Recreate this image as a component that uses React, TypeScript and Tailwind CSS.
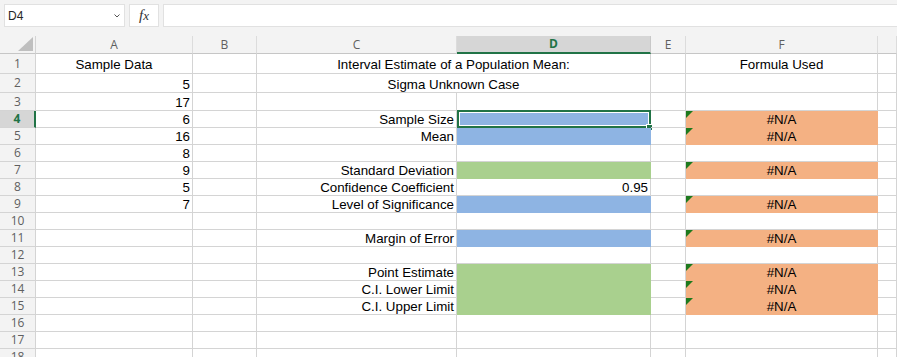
import React from 'react';

type Fill = 'blue' | 'green' | 'orange';
type CellDef = { v?: string; align?: 'l' | 'c' | 'r'; fill?: Fill; err?: boolean; span?: boolean };

const COLS = ['A', 'B', 'C', 'D', 'E', 'F', 'G'];
const SEL_COL = 'D';
const SEL_ROW = 4;
const ROW_COUNT = 18;

const FILLS: Record<Fill, string> = {
  blue: 'bg-[#8eb4e3] border-transparent',
  green: 'bg-[#a9d08e] border-transparent',
  orange: 'bg-[#f4b183] border-transparent',
};

const ALIGN = { l: 'justify-start', c: 'justify-center', r: 'justify-end' };

const na: CellDef = { v: '#N/A', align: 'c', fill: 'orange', err: true };
const num = (v: string): CellDef => ({ v, align: 'r' });
const label = (v: string): CellDef => ({ v, align: 'r' });

const sheet: Record<number, Partial<Record<string, CellDef>>> = {
  1: {
    A: { v: 'Sample Data', align: 'c' },
    C: { v: 'Interval Estimate of a Population Mean:', align: 'c', span: true },
    F: { v: 'Formula Used', align: 'c' },
  },
  2: { A: num('5'), C: { v: 'Sigma Unknown Case', align: 'c', span: true } },
  3: { A: num('17') },
  4: { A: num('6'), C: label('Sample Size'), D: { fill: 'blue' }, F: na },
  5: { A: num('16'), C: label('Mean'), D: { fill: 'blue' }, F: na },
  6: { A: num('8') },
  7: { A: num('9'), C: label('Standard Deviation'), D: { fill: 'green' }, F: na },
  8: { A: num('5'), C: label('Confidence Coefficient'), D: num('0.95') },
  9: { A: num('7'), C: label('Level of Significance'), D: { fill: 'blue' }, F: na },
  11: { C: label('Margin of Error'), D: { fill: 'blue' }, F: na },
  13: { C: label('Point Estimate'), D: { fill: 'green' }, F: na },
  14: { C: label('C.I. Lower Limit'), D: { fill: 'green' }, F: na },
  15: { C: label('C.I. Upper Limit'), D: { fill: 'green' }, F: na },
};

function ErrorMark() {
  return (
    <svg className="absolute left-0 top-0" width="7" height="7" viewBox="0 0 7 7">
      <polygon points="0,0 7,0 0,7" fill="#1e7a1e" />
    </svg>
  );
}

function Selection() {
  return (
    <>
      <div className="pointer-events-none absolute -top-[1px] left-0 -right-[1px] -bottom-[1px] border-2 border-[#217346]">
        <div className="h-full w-full border border-white" />
      </div>
      <div className="absolute -right-[3px] -bottom-[4px] h-[7px] w-[7px] border border-white bg-[#217346]" />
    </>
  );
}

function Cell({ def, col, row }: { def?: CellDef; col: string; row: number }) {
  const fill = def?.fill ? FILLS[def.fill] : 'border-[#d4d4d4]';
  const align = ALIGN[def?.align ?? 'l'];
  const selected = col === SEL_COL && row === SEL_ROW;
  return (
    <div
      className={`relative flex items-end whitespace-nowrap border-b border-r px-[2px] text-[13.33px] leading-[15px] text-black ${fill} ${align} ${
        def?.span ? 'col-span-2' : ''
      }`}
    >
      {def?.err && <ErrorMark />}
      {def?.v && <span className={row === 1 ? 'pb-[1px]' : ''}>{def.v}</span>}
      {selected && <Selection />}
    </div>
  );
}

function Toolbar() {
  return (
    <div className="flex h-[36px] gap-[4px] bg-[#f3f3f3] pl-[4px] pt-[4px]">
      <div className="flex h-[23px] w-[121px] items-center justify-between border border-[#e1e1e1] bg-white pl-[3px] pr-[3px] text-[12px] text-[#262626]">
        <span>D4</span>
        <svg width="6" height="4" viewBox="0 0 6 4" className="mr-[1px]">
          <path d="M0.5 0.5 L3 3 L5.5 0.5" fill="none" stroke="#555" strokeWidth="1" />
        </svg>
      </div>
      <div className="flex h-[23px] w-[30px] items-center justify-center border border-[#e1e1e1] bg-white font-['Liberation_Serif',serif] text-[15px] italic text-[#333]">
        <span className="-mt-[1px]">
          f<span className="text-[13px]">x</span>
        </span>
      </div>
      <div className="-mr-[2px] h-[23px] flex-1 border border-[#e1e1e1] bg-white" />
    </div>
  );
}

export default function App() {
  const rows = Array.from({ length: ROW_COUNT }, (_, i) => i + 1);
  return (
    <div className="h-[357px] w-[897px] overflow-hidden bg-white font-['Liberation_Sans',Arial,sans-serif]">
      <Toolbar />
      <div className="grid grid-cols-[36px_157px_64px_200px_194px_35px_192px_1fr] grid-rows-[18px_20px_19px_18px_repeat(15,17px)]">
        {/* corner */}
        <div className="flex items-end justify-end border-b border-r border-b-[#c6c6c6] border-r-[#d4d4d4] bg-[#f3f3f3] pb-[2px] pr-[2px]">
          <svg width="15" height="14" viewBox="0 0 15 14">
            <polygon points="15,0 15,14 0,14" fill="#bfbfbf" />
          </svg>
        </div>
        {/* column headers; G is cut off by the window so its letter is not shown */}
        {COLS.map((c) =>
          c === SEL_COL ? (
            <div
              key={c}
              className="flex items-center justify-center border-b-2 border-r border-b-[#217346] border-r-[#c8c8c8] bg-[#d6d6d6] font-['Open_Sans',sans-serif] text-[12px] font-bold text-[#217346]"
            >
              {c}
            </div>
          ) : (
            <div
              key={c}
              className="flex items-center justify-center border-b border-r border-b-[#c6c6c6] border-r-[#dcdcdc] bg-[#f3f3f3] font-['Open_Sans',sans-serif] text-[12px] text-[#5f5f5f]"
            >
              {c === 'G' ? '' : c}
            </div>
          )
        )}
        {rows.map((r) => {
          const defs = sheet[r] ?? {};
          return (
            <React.Fragment key={r}>
              {r === SEL_ROW ? (
                <div className="flex items-center justify-center border-b border-r-2 border-b-[#d4d4d4] border-r-[#217346] bg-[#d6d6d6] font-['Open_Sans',sans-serif] text-[12px] font-bold text-[#217346]">
                  {r}
                </div>
              ) : (
                <div className="flex items-center justify-center border-b border-r border-[#d4d4d4] bg-[#f3f3f3] font-['Open_Sans',sans-serif] text-[12px] text-[#5f5f5f]">
                  {r}
                </div>
              )}
              {COLS.map((c) => {
                if (c === 'D' && defs.C?.span) return null;
                return <Cell key={c} def={defs[c]} col={c} row={r} />;
              })}
            </React.Fragment>
          );
        })}
      </div>
    </div>
  );
}
